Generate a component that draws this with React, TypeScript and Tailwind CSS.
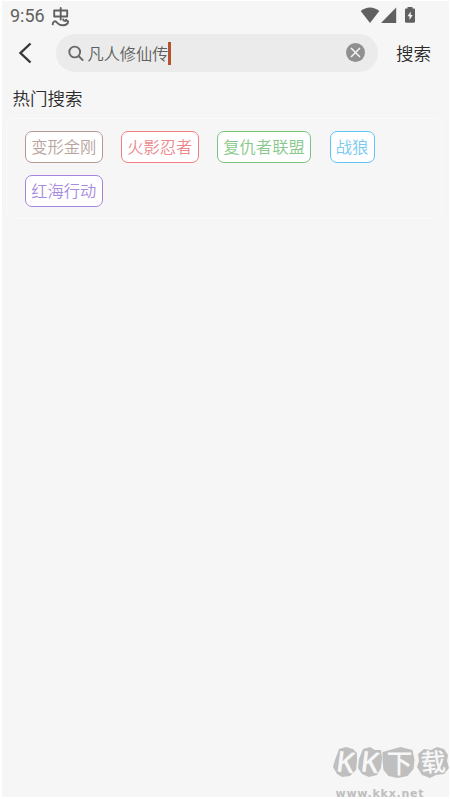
import React, { useState } from 'react';

interface HotTag {
    label: string;
    className: string;
}

const hotTags: HotTag[] = [
    { label: '变形金刚', className: 'w-[77.5px] border-[#b39a92] text-[#b8a49d]' },
    { label: '火影忍者', className: 'w-[77.5px] border-[#f07f83] text-[#ec888d]' },
    { label: '复仇者联盟', className: 'w-[94px] border-[#7cc27f] text-[#88c88b]' },
    { label: '战狼', className: 'w-[45px] border-[#5ec3f5] text-[#78c9f3]' },
    { label: '红海行动', className: 'w-[77.5px] border-[#a584dc] text-[#a98ddd]' },
];

function StatusBar() {
    return (
        <div className="flex h-[31px] items-center pl-2 pr-[33px] text-[#606060]">
            <span className="w-[41px] pb-0.5 font-['Roboto',sans-serif] text-[18px] font-normal leading-[28px]">9:56</span>
            <svg width="19" height="20" viewBox="0 0 19 20" fill="none" stroke="currentColor" strokeWidth="1.9" strokeLinecap="round" strokeLinejoin="round">
                <path d="M3.200 3.500h13v6h-13zM9.700 1v11.500M1.700 17.300c.3-3 2.300-3.800 3.800-2.200l1.600 1.600c2.300 2.300 8.200 2.100 9.800-1 .8-1.800-1-2.900-2.300-1.800M12.200 12.500c.3 1.700 2.500 1.700 2.900.2" />
            </svg>
            <div className="ml-auto flex items-center pb-1">
                <svg width="20" height="18" viewBox="0 0 20 18" fill="currentColor">
                    <path d="M10 17 .7 5.100C6 .3 14 .3 19.300 5.100z" />
                </svg>
                <svg width="17" height="18" viewBox="0 0 17 18" fill="currentColor">
                    <path d="M16.200 1.500V17H1z" />
                </svg>
                <svg className="ml-[7px]" width="12" height="18" viewBox="0 0 12 18" fill="currentColor">
                    <path fillRule="evenodd" d="M3.500 1h5v1.600h1.300c.8 0 1.200.4 1.200 1.200v11.800c0 .8-.4 1.200-1.200 1.200H2.200c-.8 0-1.200-.4-1.200-1.200V3.800c0-.8.4-1.200 1.200-1.200h1.300zM6.700 5.500 3.500 10.300h2V14l3.200-4.900h-2z" />
                </svg>
            </div>
        </div>
    );
}

function Watermark() {
    return (
        <div className="absolute bottom-0 right-0">
            <svg width="118" height="71" viewBox="332 728 118 71">
                <g fill="#bfbfbf">
                    <path d="m339 749 7-2 7 2 4 4 0 8-1 9-6 6-8 1-5-3-4-7 2-7z" />
                    <path d="m363 749 7-2 5 3 6 0 1 8-1 10-4 7-8 2-7-3-4-6 1-9z" />
                    <path d="m382.500 752 18-5 12 3 2 10-1 9-6 7-10 2-9-2-5-6-1-9z" />
                    <path d="m418 754 6-5 7 1 6-3 7 2 4 6-1 6 2 7-5 6-8 1-6 3-8-3-5-8 2-6z" />
                </g>
                <g fill="#f7f7f7" textAnchor="middle">
                    <text x="345.500" y="772.500" className="font-['Open_Sans',sans-serif] text-[29px] font-semibold" transform="rotate(7 345 762)">K</text>
                    <text x="370" y="772.500" className="font-['Open_Sans',sans-serif] text-[29px] font-semibold" transform="rotate(7 370 762)">K</text>
                    <text x="399.500" y="772.500" className="font-['Noto_Sans_CJK_SC',sans-serif] text-[26px] font-medium">下</text>
                    <text x="433" y="771.500" className="font-['Noto_Sans_CJK_SC',sans-serif] text-[25px] font-medium" transform="rotate(-4 433 762)">载</text>
                </g>
                <text x="335.500" y="796.500" fill="#bebebe" textLength="88" className="font-['DejaVu_Sans',sans-serif] text-[11px] font-bold">www.kkx.net</text>
            </svg>
        </div>
    );
}

export default function App() {
    const [keyword, setKeyword] = useState('凡人修仙传');

    return (
        <div className="relative h-[799px] w-[450px] overflow-hidden bg-white pt-px pr-px pb-0.5 pl-0.5 font-['Noto_Sans_CJK_SC',sans-serif] font-[350]">
            <div className="h-full bg-[#f6f6f6]">
                <StatusBar />

                {/* Search header */}
                <header className="flex items-center pt-0.5">
                    <button type="button" aria-label="返回" className="flex h-[38px] w-[54px] items-center pl-4">
                        <svg width="15" height="22" viewBox="0 0 15 22" fill="none" stroke="#373737" strokeWidth="2.4">
                            <path d="M12.500 1.500 2.500 11l10 9.500" />
                        </svg>
                    </button>
                    <div className="flex h-[38px] w-[322px] items-center rounded-full bg-[#ebebeb] pl-3 pr-[12px]">
                        <svg width="16" height="17" viewBox="0 0 16 17" fill="none" stroke="#686868" strokeWidth="1.9">
                            <circle cx="6.700" cy="7" r="5.400" />
                            <path d="m10.600 11 4.600 4.700" />
                        </svg>
                        <div className="ml-[3.500px] flex items-center text-[16.200px] leading-[24px] text-[#606060]">
                            <span className="pb-px">{keyword}</span>
                            <span className="h-[23px] w-[2.500px] bg-[#b5532c]" />
                        </div>
                        <button type="button" aria-label="清除" className="ml-auto" onClick={() => setKeyword('')}>
                            <svg width="20" height="20" viewBox="0 0 20 20">
                                <circle cx="9.500" cy="9.500" r="9.500" fill="#909090" />
                                <path d="m5 5 9 9m0-9-9 9" stroke="#f5f5f5" strokeWidth="1.500" />
                            </svg>
                        </button>
                    </div>
                    <button type="button" className="ml-[18px] pb-px text-[17.500px] leading-[26px] text-[#2b2b2b]">搜索</button>
                </header>

                <h2 className="mt-[13px] pl-[10.500px] text-[17.500px] leading-[26px] text-[#2b2b2b]">热门搜索</h2>

                {/* Hot searches */}
                <div className="ml-1 mr-[7px] mt-[7px] flex h-[101px] flex-wrap content-start gap-x-[18.500px] gap-y-[12px] rounded-lg border border-[#fafafa] pl-[18px] pt-[12px]">
                    {hotTags.map((tag) => (
                        <button
                            key={tag.label}
                            type="button"
                            className={`flex h-8 items-center justify-center whitespace-nowrap rounded-[7px] border bg-white pb-px text-[16.300px] leading-none ${tag.className}`}
                        >
                            {tag.label}
                        </button>
                    ))}
                </div>
            </div>
            <Watermark />
        </div>
    );
}
